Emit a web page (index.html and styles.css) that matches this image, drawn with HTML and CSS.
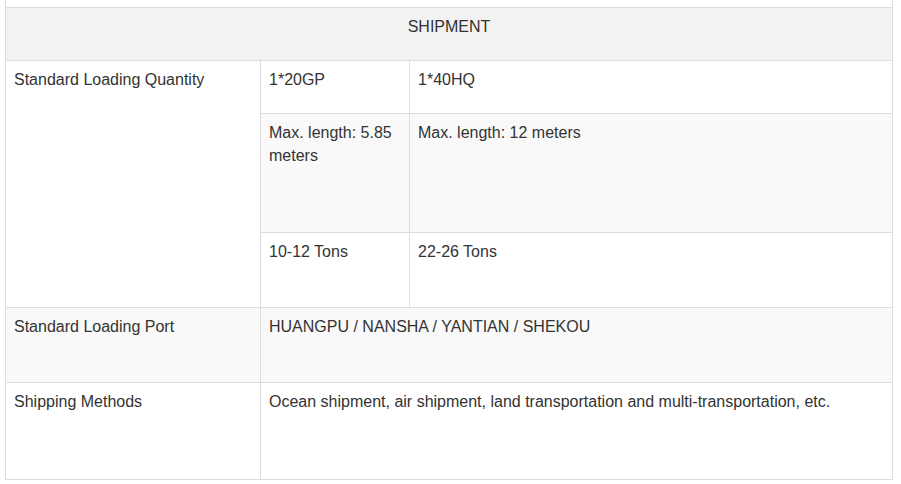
FILE: index.html
```html
<!DOCTYPE html>
<html>
<head>
<meta charset="utf-8">
<link rel="stylesheet" href="styles.css">
</head>
<body>
<table class="spec">
  <colgroup>
    <col class="c1">
    <col class="c2">
    <col class="c3">
  </colgroup>
  <tbody>
    <tr class="r-top"><td colspan="3"></td></tr>
    <tr class="r-head"><td colspan="3" class="head">SHIPMENT</td></tr>
    <tr class="r-53">
      <td rowspan="3" class="plain">Standard Loading Quantity</td>
      <td class="plain">1*20GP</td>
      <td class="plain">1*40HQ</td>
    </tr>
    <tr class="r-119">
      <td class="stripe">Max. length: 5.85 meters</td>
      <td class="stripe">Max. length: 12 meters</td>
    </tr>
    <tr class="r-75">
      <td class="plain">10-12 Tons</td>
      <td class="plain">22-26 Tons</td>
    </tr>
    <tr class="r-75">
      <td class="stripe">Standard Loading Port</td>
      <td colspan="2" class="stripe">HUANGPU / NANSHA / YANTIAN / SHEKOU</td>
    </tr>
    <tr class="r-97">
      <td class="plain">Shipping Methods</td>
      <td colspan="2" class="plain">Ocean shipment, air shipment, land transportation and multi-transportation, etc.</td>
    </tr>
  </tbody>
</table>
</body>
</html>
```
FILE: styles.css
```css
html, body {
  margin: 0;
  padding: 0;
  background: #fff;
}
body {
  font-family: "Liberation Sans", Arial, sans-serif;
  font-size: 16px;
  line-height: 1.42857;
  color: #333;
}
.spec {
  margin-left: 5px;
  width: 887px;
  table-layout: fixed;
  border-collapse: collapse;
}
.c1 { width: 255px; }
.c2 { width: 149px; }
.c3 { width: 483px; }
.spec td {
  border: 1px solid #ddd;
  padding: 8px;
  vertical-align: top;
}
.r-top td {
  border-top: none;
  padding: 0;
  height: 7px;
}
.head {
  background: #f2f2f2;
  text-align: center;
}
.plain { background: #fff; }
.stripe { background: #f9f9f9; }
.r-head { height: 53px; }
.r-53 { height: 53px; }
.r-119 { height: 119px; }
.r-75 { height: 75px; }
.r-97 { height: 97px; }
```
